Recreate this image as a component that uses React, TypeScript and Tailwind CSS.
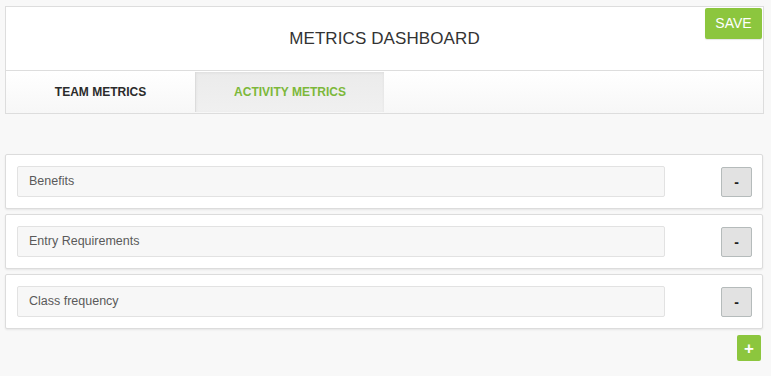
import { useState } from "react"

interface Metric {
  label: string
}

const metrics: Metric[] = [
  { label: "Benefits" },
  { label: "Entry Requirements" },
  { label: "Class frequency" },
]

const MetricRow = ({ label }: Metric) => {
  return (
    <div className="flex items-center h-[55px] bg-white border border-[#dcdcdc] rounded-[2px] shadow-[0_1px_2px_rgba(0,0,0,0.08)] pl-[11px] pr-[10px]">
      <div className="w-[648px] h-[31px] flex items-center bg-[#f7f7f7] border border-[#e2e2e2] rounded-[2px] px-[11px] text-[12.5px] text-[#5a5a5a]">
        {label}
      </div>
      <div className="flex-1" />
      <button className="w-[31px] h-[30px] flex items-center justify-center bg-[#e2e2e2] border border-[#b5bbbb] rounded-[2px] text-[14px] font-bold text-[#222] leading-none">
        -
      </button>
    </div>
  )
}

export default function App() {
  const [tab, setTab] = useState("activity")

  return (
    <div className="min-h-[376px] w-full bg-[#f8f8f8] pt-[6px] px-[5px] font-['Liberation_Sans',Arial,sans-serif]">
      <div className="w-[759px] bg-white border border-[#dddddd]">
        <div className="relative h-[64px] flex items-center justify-center border-b border-[#dddddd]">
          <h1 className="text-[17px] text-[#333] tracking-[0.1px]">METRICS DASHBOARD</h1>
          <button className="absolute right-[1px] top-[1px] w-[57px] h-[31px] bg-[#8cc63e] rounded-[2px] text-white text-[14px] shadow-[0_1px_1px_rgba(0,0,0,0.1)]">
            SAVE
          </button>
        </div>
        <div className="flex h-[42px] bg-gradient-to-b from-white to-[#f7f7f7]">
          <button
            onClick={() => setTab("team")}
            className={`w-[189px] h-full text-[12px] font-bold ${
              tab === "team" ? "bg-[#ececec] text-[#7ab535]" : "text-[#2b2b2b]"
            }`}
          >
            TEAM METRICS
          </button>
          <button
            onClick={() => setTab("activity")}
            className={`w-[189px] h-[40px] mt-[1px] text-[12px] font-bold border-l border-[#dcdcdc] shadow-[inset_0_1px_3px_rgba(0,0,0,0.06)] ${
              tab === "activity" ? "bg-gradient-to-b from-[#ebebeb] to-[#f0f0f0] text-[#7cb83a]" : "text-[#2b2b2b]"
            }`}
          >
            ACTIVITY METRICS
          </button>
        </div>
      </div>

      <div className="mt-[40px] w-[758px] flex flex-col gap-[5px]">
        {metrics.map((m) => (
          <MetricRow key={m.label} label={m.label} />
        ))}
      </div>

      <div className="w-[756px] flex justify-end mt-[6px]">
        <button className="w-[24px] h-[26px] flex items-center justify-center bg-[#8cc63e] rounded-[2px] text-white text-[17px] font-bold leading-none">
          +
        </button>
      </div>
    </div>
  )
}
